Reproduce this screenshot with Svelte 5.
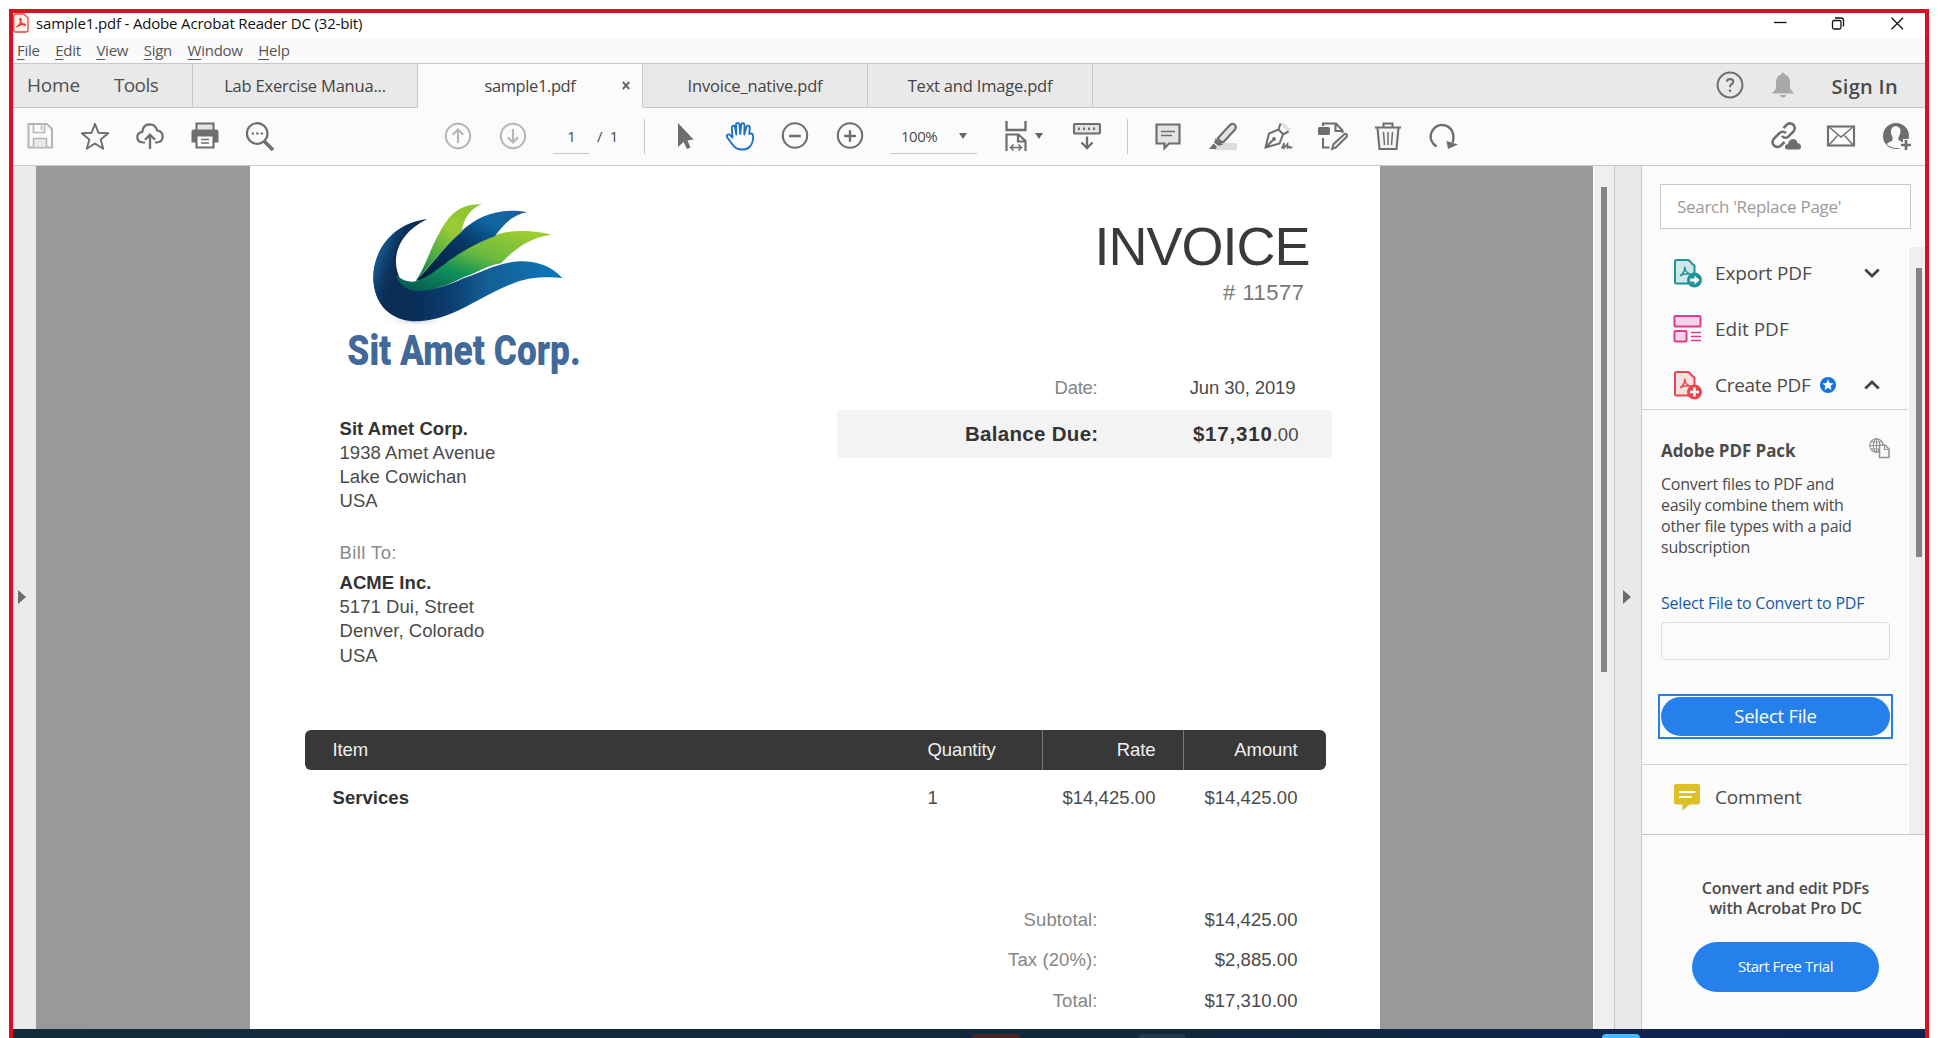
<script>
  const menus = ['File', 'Edit', 'View', 'Sign', 'Window', 'Help'];
  const tabs = [
    { name: 'Lab Exercise Manua...', active: false },
    { name: 'sample1.pdf', active: true },
    { name: 'Invoice_native.pdf', active: false },
    { name: 'Text and Image.pdf', active: false }
  ];
  const seller = ['1938 Amet Avenue', 'Lake Cowichan', 'USA'];
  const buyer = ['5171 Dui, Street', 'Denver, Colorado', 'USA'];
  const totals = [
    ['Subtotal:', '$14,425.00'],
    ['Tax (20%):', '$2,885.00'],
    ['Total:', '$17,310.00']
  ];
</script>

<div class="window">
  <header class="titlebar">
    <svg class="app-icon" width="16" height="20" viewBox="0 0 16 20">
      <path d="M2 1H11L15 5V17Q15 19 13 19H2Q.7 19 .7 17V3Q.7 1 2 1Z" fill="#fff0ee" stroke="#e8453c" stroke-width="1.3" />
      <path d="M3.5 14Q7.5 12 8 6.5Q7.5 4.500 6.800 6Q7 10 12 12.500Q13 11.500 11 11Q7 11 3.500 14Z" fill="none" stroke="#e8352c" stroke-width="1.300" />
    </svg>
    <span class="caption">sample1.pdf - Adobe Acrobat Reader DC (32-bit)</span>
    <svg class="win-buttons" width="130" height="14" viewBox="0 0 130 14" fill="none" stroke="#111" stroke-width="1.300">
      <path d="M0 5.500H12.500" />
      <rect x="58.500" y="3.500" width="8.500" height="8.500" rx="1.500" />
      <path d="M61 1H67Q69.500 1 69.500 3.500V9.500" />
      <path d="M117.500 .8L129 12.200M129 .8L117.500 12.200" />
    </svg>
  </header>

  <nav class="menubar">
    {#each menus as m}<span><u>{m[0]}</u>{m.slice(1)}</span>{/each}
  </nav>

  <div class="tabbar">
    <div class="main-tabs"><span class="home">Home</span><span class="tools">Tools</span></div>
    {#each tabs as t}
      <div class="tab" class:active={t.active}>
        {t.name}
        {#if t.active}
          <svg class="close" width="8" height="9" viewBox="0 0 8 9"><path d="M.8 1L7.200 8M7.200 1L.8 8" stroke="#666" stroke-width="1.900" /></svg>
        {/if}
      </div>
    {/each}
    <div class="account">
      <svg width="28" height="28" viewBox="0 0 28 28" fill="none" stroke="#6e6e6e">
        <circle cx="14" cy="14" r="12.400" stroke-width="2" />
        <path d="M10.800 10.600Q11.200 8 14.200 8Q17.300 8.200 17.200 10.800Q17 12.500 15.300 13.300Q14 14 14 16.300" stroke-width="2.100" />
        <circle cx="14" cy="19.700" r="1.300" fill="#6e6e6e" stroke="none" />
      </svg>
      <svg width="22" height="26" viewBox="0 0 22 26" fill="#a9a9a9">
        <path d="M11 .5Q12.800.5 12.800 2.500Q18 4 18 10V16Q18.500 18.500 21.500 20.500V21.500H.5V20.500Q3.500 18.500 4 16V10Q4 4 9.200 2.500Q9.200.5 11 .5ZM7.500 23H14.500Q13.500 25.500 11 25.500Q8.500 25.500 7.500 23Z" />
      </svg>
      <span>Sign In</span>
    </div>
  </div>

  <div class="toolbar">
    <div class="cells file-tools">
      <svg class="pale" viewBox="0 0 32 32"><path d="M4.500 4H23L28 9V27.500H4.500Z" /><path d="M9.500 4V12.500H20.500V4M17.500 5.500V10" stroke-width="1.600" /><path d="M9.500 27V18.500H22.500V27" fill="#e8e8e8" stroke-width="1.600" /></svg>
      <svg viewBox="0 0 32 32"><path d="M16 3.800L19.500 12.800L29.200 13.300L21.700 19.400L24.200 28.700L16 23.500L7.800 28.700L10.300 19.400L2.800 13.300L12.500 12.800Z" stroke-width="1.900" stroke-linejoin="round" /></svg>
      <svg viewBox="0 0 32 32"><path d="M11 22.500H9Q3.300 22.300 3.300 17Q3.500 12.500 8.300 11.800Q9 4.500 15.500 4.300Q21.500 4.300 23.200 10.500Q28.700 11.300 28.700 16.800Q28.500 22 23 22.500H21" stroke-width="2.200" /><path d="M16 29V15M11 19.800L16 14.600L21 19.800" stroke-width="2.300" /></svg>
      <svg viewBox="0 0 32 32"><path d="M7.500 10V3.500H24.500V10" fill="#e4e4e4" /><path d="M2.500 12Q2.500 9.500 5 9.500H27Q29.500 9.500 29.500 12V22.500H25V16H7V22.500H2.500Z" fill="#6e6e6e" stroke="none" /><path d="M7.500 15.500H24.500V27.500H7.500Z" fill="#fff" /><path d="M12 19.500H20M12 23H20" stroke-width="1.500" /></svg>
      <svg viewBox="0 0 32 32"><circle cx="13.200" cy="13.500" r="10.300" stroke-width="2.200" /><path d="M20.500 21.500L29 30" stroke-width="3.600" /><path d="M7.700 13.500h2.400M12.200 13.500h2.400M16.700 13.500h2.400" stroke-width="2.200" /></svg>
    </div>
    <div class="cells paging">
      <svg class="pale" viewBox="0 0 32 32"><circle cx="16" cy="16" r="12.200" /><path d="M16 23V10M10.800 14.800L16 9.500L21.200 14.800" /></svg>
      <svg class="pale" viewBox="0 0 32 32"><circle cx="16" cy="16" r="12.200" /><path d="M16 9V22M10.800 17.200L16 22.500L21.200 17.200" /></svg>
    </div>
    <div class="page-field">1</div>
    <div class="page-count">/&nbsp; 1</div>
    <i class="sep"></i>
    <div class="cells tools-zoom">
      <svg viewBox="0 0 32 32"><path d="M9 3V27L14.500 22L18 29L21.500 27.500L18.500 20.500L24.500 19.500Z" fill="#6e6e6e" stroke="none" /></svg>
      <svg class="blue" viewBox="0 0 32 32"><path d="M8.500 17.500L7.800 7.500Q8 5.600 9.500 5.700Q11 5.800 11.200 8L12.300 14.500L12 4.500Q12.200 2.900 13.700 2.900Q15.400 3 15.500 4.500L16.200 14L17.200 4.500Q17.500 3 19 3.200Q20.500 3.400 20.500 5L20.300 14.500L22.500 6.800Q23.200 5.300 24.500 5.700Q26 6.300 25.800 8L25.300 14Q29.500 12 29.200 18Q28.500 24 26 26.500Q22.500 30 17.500 29.500Q11 29 8.500 24.500L3.200 17.500Q2.300 15.500 3.800 14.600Q5.300 14 6.500 15.300Z" stroke-width="1.900" stroke-linejoin="round" /></svg>
      <svg viewBox="0 0 32 32"><circle cx="16" cy="15.500" r="12.200" /><path d="M10.200 16H21.800" stroke-width="2.600" /></svg>
      <svg viewBox="0 0 32 32"><circle cx="16" cy="15.500" r="12.200" /><path d="M10.200 16H21.800M16 10.200V21.800" stroke-width="2.400" /></svg>
    </div>
    <div class="zoom-field"><span>100%</span><i class="caret"></i></div>
    <svg class="fit" viewBox="0 0 32 32"><path d="M6.500 1V10H25.500V1" stroke-width="2.300" /><path d="M6.500 31V14.500H18.500L25.500 21V31M18 15V21.500H25" stroke-width="2.200" /><path d="M10.500 27.500H21.500M13.500 24.500L10.500 27.500L13.500 30.500M18.500 24.500L21.500 27.500L18.500 30.500" stroke-width="1.500" /></svg>
    <i class="caret"></i>
    <svg class="scrolling" viewBox="0 0 32 32"><rect x="3" y="4" width="26" height="9.500" rx="1" fill="#e4e4e4" /><path d="M7 8.800h2M12 8.800h2M17 8.800h2M22 8.800h2" stroke-width="2.500" /><path d="M16 16.500V28M10.500 22.500L16 28L21.500 22.500" stroke-width="2.300" /></svg>
    <i class="sep"></i>
    <div class="cells edit-tools">
      <svg viewBox="0 0 32 32"><path d="M4.500 4.500H27.500V23.500H17L12.500 28V23.500H4.500Z" fill="#e4e4e4" stroke-width="2.200" /><path d="M9 11.500H23M9 15.500H20" stroke-width="1.500" /></svg>
      <svg viewBox="0 0 32 32"><path d="M16 23H30V30H6Z" fill="#dcdcdc" stroke="none" /><path d="M11 18L22.500 5.500Q25 2.800 27.500 4.500Q30 6.800 28 9.500L16.500 22Q13.500 23 11 18Z" fill="#e4e4e4" /><path d="M8.800 18L16 24.500L11.500 26L7 22.500ZM6.500 23.500L10 26.500L9 29H2Z" fill="#6e6e6e" stroke="none" /></svg>
      <svg viewBox="0 0 32 32"><path d="M18 4L26 12L29 9L21 3Z" fill="#dedede" stroke="none" /><path d="M18.500 3.500L16.500 9.500L7 13.500L3.500 27.500L17.500 23.500L21 14.500L26.500 11.500M16.500 9.500L21.500 14.500M3.500 27.500L11 20" stroke-width="2" /><circle cx="12" cy="19" r="1.900" fill="#6e6e6e" stroke="none" /><path d="M19.500 28.500Q21.500 26 22 23L22 28Q24 26 25.500 24L25.500 28L27.500 26.500L28 28L30.500 27" stroke-width="1.600" /></svg>
      <svg viewBox="0 0 32 32"><path d="M6 6V3.500H19L25.500 10.500V13M18.500 4V11H25" /><rect x="1" y="7" width="12" height="8" rx="1.500" fill="#6e6e6e" stroke="none" /><path d="M6 18V27.500H12.500" /><path d="M15 29L16.500 24L27.500 14Q29.500 13 30 15.500L30 16.500L19 27.500Z" fill="#e4e4e4" stroke-width="1.900" /></svg>
      <svg viewBox="0 0 32 32"><path d="M5.500 8L7.500 29H24.500L26.500 8" fill="#f4f4f4" /><path d="M3 7.500H29M11.500 7V3.500H20.500V7" /><path d="M11.500 12L12.500 25M16 12V25M20.500 12L19.500 25" stroke-width="1.500" /></svg>
      <svg viewBox="0 0 32 32"><path d="M9.500 26.500Q2.500 21.500 3.800 14.500Q6 6.500 13.500 5Q22 4.500 25.300 11.500Q27.500 17 25.500 22.500" stroke-width="2.400" /><path d="M19.500 21L31 24.500L21 29Z" fill="#6e6e6e" stroke="none" /></svg>
    </div>
    <div class="cells share">
      <svg viewBox="0 0 32 32"><path d="M13.500 8L17 4.500Q20.500 2 23.500 5Q26 8 23.500 11.500L18 17Q14.500 19 12 16M16 13Q13 10.500 9.500 13L4 18.500Q1 22.500 4 25.500Q7.500 28.500 11 25.500L14.500 22" stroke-width="2.500" /><path d="M17 29.500Q14.500 29 15 26Q16 24 18 24Q19 19 23.500 19Q27 19.500 27.500 23Q31 23.500 31 26.500Q31 29.500 28.500 29.500Z" fill="#6e6e6e" stroke="none" /></svg>
      <svg viewBox="0 0 32 32"><rect x="3" y="6.500" width="26" height="19" /><path d="M4 7L16 17L28 7M4 25L12.500 15.500M28 25L19.500 15.500" stroke-width="1.400" /></svg>
      <svg viewBox="0 0 32 32"><circle cx="16" cy="16" r="13" fill="#6e6e6e" stroke="none" /><path d="M12.500 17Q10.500 14 11 10.500Q11.500 6.500 15.500 6.300Q20 6.500 20.500 10.500Q20.800 14 18.500 17V20L22 22V28H16Q11 28 6.500 24Q9 22 12.500 20.500Z" fill="#fbfbfb" stroke="none" /><path d="M26 19V31M20 25H32" stroke="#fbfbfb" stroke-width="6" /><path d="M26 20V30M21 25H31" stroke-width="2.700" /></svg>
    </div>
  </div>

  <div class="workspace">
    <div class="left-rail"><i class="arrow"></i></div>
    <main class="canvas">
      <article class="page">
        <div class="page-head">
          <div class="parties">
            <svg class="logo" width="290" height="210" viewBox="0 0 870 630">
              <defs>
                <linearGradient id="body" x1="0" y1="0" x2="1" y2="0"><stop offset="0" stop-color="#0d2b50" /><stop offset=".25" stop-color="#09305a" /><stop offset=".4" stop-color="#0b3e70" /><stop offset=".62" stop-color="#155f98" /><stop offset="1" stop-color="#0a78bd" /></linearGradient>
                <linearGradient id="rim" gradientUnits="userSpaceOnUse" x1="150" y1="250" x2="235" y2="280"><stop offset="0" stop-color="#19669c" /><stop offset=".35" stop-color="#134f83" stop-opacity=".85" /><stop offset="1" stop-color="#0b2f58" stop-opacity="0" /></linearGradient>
                <linearGradient id="feather" x1="0" y1="1" x2="1" y2="0"><stop offset="0" stop-color="#021b38" /><stop offset=".5" stop-color="#083866" /><stop offset=".75" stop-color="#0f65a3" /><stop offset="1" stop-color="#1e619c" /></linearGradient>
                <linearGradient id="leaf" x1=".1" y1="1" x2=".65" y2="0"><stop offset="0" stop-color="#067a55" /><stop offset=".35" stop-color="#4fae45" /><stop offset=".7" stop-color="#9bcb35" /><stop offset="1" stop-color="#8fc52e" /></linearGradient>
                <linearGradient id="wing" x1="0" y1=".9" x2=".8" y2="0"><stop offset="0" stop-color="#075b57" /><stop offset=".35" stop-color="#0f9257" /><stop offset=".62" stop-color="#6cba3f" /><stop offset="1" stop-color="#9ccc31" /></linearGradient>
                <radialGradient id="shade"><stop offset="0" stop-color="#c6ccdc" /><stop offset="1" stop-color="#fff" stop-opacity="0" /></radialGradient>
              </defs>
              <ellipse cx="285" cy="424" rx="110" ry="14" fill="url(#shade)" />
              <path d="M322 117C215 130 160 215 160 292C160 375 215 424 285 424C400 424 480 345 590 306C640 289 690 291 727 294C695 258 650 243 600 244C530 248 490 275 430 295C360 330 285 345 245 305C210 245 225 165 322 117Z" fill="url(#body)" />
              <path d="M322 117C215 130 160 215 160 292C160 375 215 424 285 424C245 400 215 350 225 285C210 225 235 155 322 117Z" fill="url(#rim)" />
              <path d="M229 285C250 305 275 308 290 303C350 275 390 235 450 200C520 155 600 140 695 164C635 172 590 200 543 250C500 256 470 280 430 292C370 325 310 340 270 330C245 320 232 300 229 285Z" fill="url(#wing)" />
              <path d="M287 303C330 262 365 208 422 156C475 105 545 82 621 97C575 105 550 135 525 168C480 185 440 205 390 240C350 270 320 295 287 303Z" fill="url(#feather)" />
              <path d="M287 303C320 255 330 205 360 155C385 110 415 70 486 73C450 85 430 118 425 156C380 190 330 260 287 303Z" fill="url(#leaf)" />
              <text class="logo-text" x="82" y="555" textLength="700" lengthAdjust="spacingAndGlyphs">Sit Amet Corp.</text>
            </svg>
            <address>
              <b>Sit Amet Corp.</b>
              {#each seller as line}<span>{line}</span>{/each}
            </address>
            <div class="bill-to">Bill To:</div>
            <address>
              <b>ACME Inc.</b>
              {#each buyer as line}<span>{line}</span>{/each}
            </address>
          </div>
          <div class="summary">
            <h1>INVOICE</h1>
            <div class="number"># 11577</div>
            <div class="date"><span class="label">Date:</span><span class="value">Jun 30, 2019</span></div>
            <div class="balance"><b class="label">Balance Due:</b><span class="value"><b>$17,310</b>.00</span></div>
          </div>
        </div>
        <div class="row head"><span>Item</span><span>Quantity</span><span class="num">Rate</span><span class="num">Amount</span></div>
        <div class="row item"><b>Services</b><span>1</span><span class="num">$14,425.00</span><span class="num">$14,425.00</span></div>
        <div class="totals">
          {#each totals as [label, value]}
            <div class="total"><span class="label">{label}</span><span class="value">{value}</span></div>
          {/each}
        </div>
      </article>
    </main>
    <div class="doc-scroll"><i class="thumb"></i></div>
    <div class="right-rail"><i class="arrow"></i></div>

    <aside class="panel">
      <div class="search">Search 'Replace Page'</div>
      <div class="panel-body">
        <div class="panel-list">
          <div class="tool export">
            <svg width="30" height="30" viewBox="0 0 30 30"><path d="M3.500 2H15.500L21.500 8V25.500H3.500Q2 25.500 2 24V3.500Q2 2 3.500 2Z" fill="#cfe8e7" stroke="#1b9596" stroke-width="2" /><path d="M7 18Q12 14 11.800 8.500Q12 15 17.500 16M7 18Q11 15 17.500 16" fill="none" stroke="#1b9596" stroke-width="1.400" /><circle cx="21.500" cy="22" r="7.500" fill="#1b9596" /><path d="M17 20.500H21.500V17.500L26.500 22L21.500 26.500V23.500H17Z" fill="#fff" /></svg>
            <span>Export PDF</span>
            <svg class="chev" width="16" height="10" viewBox="0 0 16 10"><path d="M1.300 1.500L8 8L14.700 1.500" /></svg>
          </div>
          <div class="tool edit">
            <svg width="30" height="30" viewBox="0 0 30 30" fill="#f8d3e8" stroke="#dc3c96" stroke-width="2"><rect x="1.500" y="2" width="26" height="10.500" rx="1" /><rect x="1.500" y="17" width="12" height="10.500" rx="1" /><path d="M18 18.500H28M18 22.500H28M18 26.500H28" stroke-width="1.300" /></svg>
            <span>Edit PDF</span>
          </div>
          <div class="tool create">
            <svg width="30" height="30" viewBox="0 0 30 30"><path d="M3.500 2H15.500L21.500 8V25.500H3.500Q2 25.500 2 24V3.500Q2 2 3.500 2Z" fill="#fbdfe0" stroke="#e34850" stroke-width="2" /><path d="M7 18Q12 14 11.800 8.500Q12 15 17.500 16M7 18Q11 15 17.500 16" fill="none" stroke="#e34850" stroke-width="1.400" /><circle cx="21.500" cy="22" r="7.500" fill="#e34850" /><path d="M21.500 17.500V26.500M17 22H26" stroke="#fff" stroke-width="2.400" /></svg>
            <span>Create PDF</span>
            <svg class="badge" width="16" height="16" viewBox="0 0 16 16"><circle cx="8" cy="8" r="8" fill="#1473e6" /><path d="M8 2.300L9.600 6.100L13.600 6.400L10.500 9L11.500 13L8 10.800L4.500 13L5.500 9L2.400 6.400L6.400 6.100Z" fill="#fff" /></svg>
            <svg class="chev" width="16" height="10" viewBox="0 0 16 10"><path d="M1.300 8.500L8 2L14.700 8.500" /></svg>
          </div>
          <section class="pack">
            <div class="pack-title">
              <b>Adobe PDF Pack</b>
              <svg width="21" height="21" viewBox="0 0 21 21" fill="none" stroke="#929292" stroke-width="1.100"><circle cx="7.500" cy="7.500" r="6.700" /><ellipse cx="7.500" cy="7.500" rx="3.200" ry="6.700" /><path d="M7.500 1V14M1 7.500H14M2 4H13M2 11H10" /><path d="M10.500 7H16L20 11V19.500H10.500Z" fill="#fafafa" stroke-width="1.500" /><path d="M15.500 7V11.500H20" /></svg>
            </div>
            <p><span>Convert files to PDF and</span><span class="tight">easily combine them with</span><span>other file types with a paid</span><span>subscription</span></p>
            <div class="link">Select File to Convert to PDF</div>
            <div class="file-input"></div>
            <div class="focus-ring"><button>Select File</button></div>
          </section>
          <div class="tool comment">
            <svg width="28" height="28" viewBox="0 0 28 28"><path d="M3 1H25Q27 1 27 3V19.500Q27 21.500 25 21.500H16.500L9.500 27.500V21.500H3Q1 21.500 1 19.500V3Q1 1 3 1Z" fill="#dfbf27" /><path d="M7 9H21.500M7 14H18" stroke="#fff" stroke-width="2.200" stroke-linecap="round" /></svg>
            <span>Comment</span>
          </div>
        </div>
        <div class="panel-scroll"><i class="thumb"></i></div>
      </div>
      <footer class="promo">
        <p>Convert and edit PDFs<br />with Acrobat Pro DC</p>
        <button>Start Free Trial</button>
      </footer>
    </aside>
  </div>
  <div class="taskbar"><i class="task red"></i><i class="task slate"></i><i class="task sky"></i></div>
</div>

<style>
  :global(body) { background: #fff; overflow: hidden; }
  :global(#app) { display: flow-root; height: 1038px; overflow: hidden; }
  * { box-sizing: border-box; }
  .window { width: 1920px; height: 1029px; margin: 9px 0 0 9px; border: 4px solid #da1020; border-bottom: 0; display: flex; flex-direction: column; font-family: 'Open Sans', 'Noto Sans', sans-serif; color: #4b4b4b; white-space: nowrap; letter-spacing: -.2px; }
  svg { flex: none; display: block; }

  .titlebar { height: 25px; display: flex; background: #fff; color: #111; font-size: 15px; line-height: 21px; }
  .caption { margin-left: 7px; letter-spacing: -.17px; }
  .win-buttons { margin: 4px 21px 0 auto; }
  .menubar { height: 26px; flex: none; display: flex; gap: 15.500px; padding: 0 0 0 4px; background: #fafafa; border-bottom: 1px solid #c8c8c8; font-size: 15px; line-height: 24px; letter-spacing: -.25px; color: #555; }
  .menubar u { text-underline-offset: 3px; text-decoration-thickness: 1px; }

  .tabbar { height: 44px; flex: none; display: flex; background: #e9e9e9; }
  .main-tabs, .tab, .account { border-bottom: 1px solid #c8c8c8; }
  .main-tabs { width: 180px; border-right: 1px solid #c8c8c8; display: flex; gap: 34px; padding-left: 14px; font-size: 19px; line-height: 42px; color: #505050; }
  .tools { letter-spacing: -.6px; }
  .tab { position: relative; width: 225px; border-right: 1px solid #c8c8c8; text-align: center; font-size: 16.500px; line-height: 43px; color: #444; }
  .tab.active { background: #fbfbfb; border-bottom-color: #fbfbfb; letter-spacing: -.4px; }
  .close { position: absolute; right: 12px; top: 17px; }
  .account { flex: 1; display: flex; align-items: center; justify-content: flex-end; padding: 0 27px 2px 0; font-size: 20px; font-weight: 600; letter-spacing: .3px; }
  .account svg:nth-child(2) { margin: 0 38px 0 28px; }
  .account span { margin-top: 3px; }

  .toolbar { height: 58px; flex: none; display: flex; align-items: center; padding-bottom: 1px; background: #fbfbfb; border-bottom: 1px solid #c8c8c8; font-size: 15px; }
  .toolbar svg { width: 32px; height: 32px; fill: none; stroke: #6e6e6e; stroke-width: 2.100; }
  .toolbar svg.pale { stroke: #b6b6b6; }
  .toolbar svg.blue { stroke: #1f72cb; }
  .toolbar .cells { display: flex; }
  .cells svg { margin: 0 11.500px; }
  .file-tools { margin-left: -1px; }
  .paging { margin-left: 143px; }
  .page-field { width: 36px; height: 35px; margin-left: 13px; padding-left: 1px; border-bottom: 1px solid #c8c8c8; text-align: center; line-height: 35px; }
  .page-count { margin-left: 8px; width: 47px; }
  .sep { width: 1px; height: 35px; background: #c8c8c8; }
  .tools-zoom { margin-left: 12px; }
  .zoom-field { width: 87px; height: 35px; margin-left: 13px; padding: 0 10px 0 11px; border-bottom: 1px solid #c8c8c8; display: flex; align-items: center; justify-content: space-between; letter-spacing: -.5px; }
  .caret { border: 4px solid transparent; border-top: 6px solid #666; border-bottom: 0; }
  .fit { margin: 0 3px 0 23px; }
  .scrolling { margin: 0 24px 0 28px; }
  .edit-tools { margin-left: 12px; }
  .share { margin-left: auto; margin-right: 2px; }

  .workspace { height: 863px; flex: none; display: flex; }
  .left-rail { width: 23px; background: #ebebeb; display: flex; align-items: center; padding: 0 0 2px 5px; }
  .arrow { border: 7px solid transparent; border-left: 8px solid #6b6b6b; border-right: 0; }
  .canvas { width: 1557px; background: #999; padding-left: 213.500px; }
  .page { width: 1130px; height: 863px; background: #fff; font-family: 'Liberation Sans', Arial, sans-serif; font-size: 18.500px; line-height: 24.250px; letter-spacing: .05px; color: #4a4a4a; }
  .page b { color: #333; }
  .page-head { display: flex; height: 563.500px; }
  .parties { width: 587px; padding: 14px 0 0 90px; }
  .logo { margin: 0 0 26.700px -20px; overflow: visible; }
  .logo-text { font: 900 126px Roboto, sans-serif; fill: #41699a; }
  address { font-style: normal; display: flex; flex-direction: column; }
  .bill-to { margin: 27px 0 6px; color: #8a8a8a; letter-spacing: .4px; }
  .summary { width: 495px; padding-top: 53px; text-align: right; }
  h1 { margin: 0 22px 0 0; font-size: 54px; line-height: 54px; font-weight: 400; letter-spacing: -1px; color: #3a3a3a; }
  .number { margin: 5px 27px 68px; font-size: 22px; line-height: 30px; letter-spacing: .5px; color: #777; }
  .date, .balance, .total { display: flex; justify-content: flex-end; }
  .label { text-align: right; }
  .value { width: 200px; text-align: right; }
  .date { padding-right: 36px; height: 34px; letter-spacing: -.1px; }
  .date .value { width: 198px; }
  .date .label { letter-spacing: -.25px; }
  .date .label, .total .label { color: #858585; }
  .balance { height: 48px; padding-right: 33px; background: #f3f3f3; border-radius: 4px; line-height: 48px; }
  .balance b { font-size: 20.500px; letter-spacing: .3px; }
  .balance .value b { letter-spacing: .8px; }
  .row { display: grid; grid-template-columns: 623px 114px 141px 143px; width: 1021px; margin-left: 55px; }
  .row > :first-child { padding-left: 28px; }
  .head { height: 40.500px; line-height: 40.500px; background: #383838; border-radius: 6px; color: #f0f0f0; letter-spacing: -.1px; }
  .head .num { border-left: 1px solid #777; }
  .num { text-align: right; padding-right: 27px; }
  .num:last-child { padding-right: 28px; }
  .item { line-height: 55px; height: 129.500px; }
  .totals { padding-right: 82px; line-height: 40.900px; }
  .total .label { letter-spacing: .1px; }

  .doc-scroll { width: 22px; background: #efefef; border-left: 1px solid #fff; border-right: 1px solid #c8c8c8; padding: 21px 0 0 7px; }
  .thumb { display: block; width: 6px; background: #848484; }
  .doc-scroll .thumb { height: 485px; }
  .right-rail { width: 27px; background: #e9e9e9; border-right: 1px solid #c8c8c8; display: flex; align-items: center; padding: 0 0 2px 8px; }
  .panel { flex: 1; background: #fbfbfb; display: flex; flex-direction: column; }
  .search { width: 251px; height: 45px; margin: 18px 0 18px 18px; padding-left: 16px; background: #fff; border: 1px solid #c8c8c8; font-size: 17px; line-height: 43px; letter-spacing: -.3px; color: #9a9a9a; }
  .panel-body { height: 588px; display: flex; border-bottom: 1px solid #c8c8c8; }
  .panel-list { width: 267px; border-right: 1px solid #fff; }
  .panel-scroll { flex: 1; background: #efefef; padding: 21px 0 0 7px; }
  .panel-scroll .thumb { height: 289px; }
  .tool { display: flex; align-items: center; padding: 0 28px 0 31px; font-size: 19px; letter-spacing: -.15px; }
  .tool span { margin-left: 12px; }
  .export { height: 52px; }
  .edit { height: 60px; letter-spacing: 0; }
  .create { height: 51px; padding-top: 1px; border-bottom: 1px solid #d0d0d0; letter-spacing: -.28px; }
  .chev { margin-left: auto; fill: none; stroke: #444; stroke-width: 2.700; }
  .badge { margin-left: 9px; }
  .pack { height: 355px; padding: 28px 0 0 19px; border-bottom: 1px solid #d0d0d0; }
  .pack-title { width: 229px; height: 25px; display: flex; justify-content: space-between; font-size: 17px; line-height: 25px; letter-spacing: -.07px; }
  p { margin: 0; }
  .pack p { margin-top: 11px; font-size: 16px; line-height: 21px; letter-spacing: -.24px; }
  .pack p span { display: block; }
  .pack .tight { letter-spacing: -.31px; }
  .link { margin: 34px 0 8px; font-size: 16px; line-height: 22px; color: #1459a8; }
  .file-input { width: 229px; height: 38px; border: 1px solid #dcdcdc; border-radius: 4px; }
  .focus-ring { width: 235px; height: 45px; margin: 34px 0 0 -3px; padding: 1px; border: 2px solid #2680eb; }
  button { display: block; border: 0; padding: 0 0 2px; background: #2680eb; color: #fff; font-family: inherit; letter-spacing: -.25px; }
  .focus-ring button { width: 229px; height: 39px; border-radius: 20px; font-size: 18.500px; }
  .comment { height: 63px; }
  .comment span { margin-left: 14px; }
  .promo { display: flex; flex-direction: column; align-items: center; padding: 43px 0 0 4px; }
  .promo p { text-align: center; font-size: 16px; line-height: 20px; font-weight: 600; letter-spacing: -.16px; }
  .promo button { width: 187px; height: 50px; margin-top: 24px; border-radius: 25px; font-size: 15px; letter-spacing: -.45px; }

  .taskbar { height: 9px; flex: none; display: flex; align-items: flex-end; background: linear-gradient(90deg, #132d3b, #12293c 60%, #102550 85%, #0f2250); }
  .task { height: 4px; border-radius: 5px 5px 0 0; }
  .red { width: 48px; margin-left: 959px; background: #4c2428; }
  .slate { width: 48px; margin-left: 118px; background: #22394a; }
  .sky { width: 38px; margin-left: 416px; background: #46bdfb; }
</style>
